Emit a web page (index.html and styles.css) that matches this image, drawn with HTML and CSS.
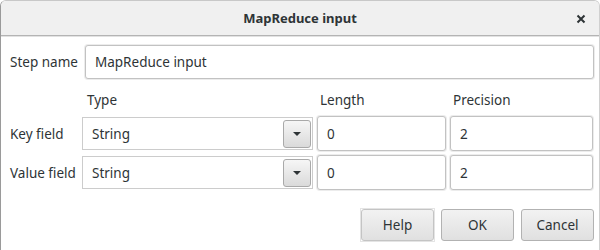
FILE: index.html
```html
<!DOCTYPE html>
<html>
<head>
<meta charset="utf-8">
<link rel="stylesheet" href="styles.css">
</head>
<body>
<div class="window">
  <div class="titlebar">
    <span class="title">MapReduce input</span>
    <span class="close">
      <svg width="10" height="10" viewBox="0 0 10 10"><path d="M1.5 1.5 L8.5 8.5 M8.5 1.5 L1.5 8.5" stroke="#2e3436" stroke-width="2" stroke-linecap="butt"/></svg>
    </span>
  </div>
  <div class="content">
    <div class="step-row">
      <span class="label">Step name</span>
      <div class="entry step-entry">MapReduce input</div>
    </div>
    <div class="grid">
      <span></span>
      <span class="head head-type">Type</span>
      <span class="head">Length</span>
      <span class="head">Precision</span>

      <span class="label">Key field</span>
      <div class="combo"><span class="combo-text">String</span><span class="combo-btn"><span class="arrow"></span></span></div>
      <div class="entry num">0</div>
      <div class="entry num">2</div>

      <span class="label">Value field</span>
      <div class="combo"><span class="combo-text">String</span><span class="combo-btn"><span class="arrow"></span></span></div>
      <div class="entry num">0</div>
      <div class="entry num">2</div>
    </div>
    <div class="buttons">
      <div class="btn-frame"><button class="btn">Help</button></div>
      <button class="btn">OK</button>
      <button class="btn">Cancel</button>
    </div>
  </div>
</div>
</body>
</html>
```
FILE: styles.css
```css
html, body {
  margin: 0;
  padding: 0;
  background: #ffffff;
}
body {
  font-family: "Noto Sans", "DejaVu Sans", sans-serif;
  font-size: 13.5px;
  color: #2e3436;
}
.window {
  width: 600px;
  height: 250px;
  box-sizing: border-box;
  border-left: 1px solid #9a9a9a;
  border-top: 1px solid #c8c8c8;
  border-right: 1px solid #d0d0d0;
  border-radius: 6px 6px 0 0;
  overflow: hidden;
  background: #ffffff;
}
.titlebar {
  height: 35px;
  box-sizing: border-box;
  background: #f0f0f0;
  border-bottom: 1px solid #b4b4b4;
  box-shadow: 0 1px 0 #e2e2e2;
  display: flex;
  align-items: center;
  justify-content: center;
  position: relative;
}
.title {
  font-weight: bold;
  font-size: 13px;
  color: #2e3436;
}
.close {
  position: absolute;
  right: 13px;
  top: 13px;
  width: 10px;
  height: 10px;
  display: flex;
}
.content {
  padding: 9px 5px 0 9px;
}
.step-row {
  display: flex;
  align-items: center;
  height: 34px;
}
.step-row .label {
  width: 75px;
}
.entry {
  box-sizing: border-box;
  border: 1px solid #c2c2c2;
  border-radius: 3px;
  background: #fff;
  display: flex;
  align-items: center;
  box-shadow: 0 0 0 1px #ececec;
}
.step-entry {
  width: 509px;
  height: 34px;
  padding-left: 9px;
}
.grid {
  display: grid;
  grid-template-columns: 68px 231px 129px 143px;
  grid-template-rows: 33px 35px 35px;
  column-gap: 4px;
  row-gap: 4px;
  align-items: center;
}
.head {
  padding-left: 3px;
  padding-top: 9px;
}
.head-type {
  padding-left: 5px;
}
.grid .entry.num {
  height: 35px;
  padding-left: 9px;
}
.combo {
  box-sizing: border-box;
  height: 33px;
  border: 1px solid #cccccc;
  background: #fff;
  display: flex;
  align-items: center;
  justify-content: space-between;
  padding: 0 1px 0 9px;
}
.combo-btn {
  box-sizing: border-box;
  width: 28px;
  height: 28px;
  border: 1px solid #a9a9a9;
  border-radius: 3px;
  background: linear-gradient(#f6f6f6, #dadada);
  display: flex;
  align-items: center;
  justify-content: center;
}
.arrow {
  width: 0;
  height: 0;
  border-left: 4px solid transparent;
  border-right: 4px solid transparent;
  border-top: 4px solid #2e3436;
}
.buttons {
  display: flex;
  justify-content: flex-end;
  gap: 7px;
  margin-top: 19px;
}
.btn {
  box-sizing: border-box;
  width: 73px;
  height: 32px;
  border: 1px solid #b2b2b2;
  border-radius: 3px;
  background: linear-gradient(#f2f2f2, #e0e0e0);
  font-family: "Noto Sans", "DejaVu Sans", sans-serif;
  font-size: 13.5px;
  color: #2e3436;
  padding: 0;
}
.btn-frame {
  display: flex;
  box-shadow: 0 0 0 1px #e4e4e4;
}
.btn-frame .btn {
  border-color: #c4c4c4;
}
```
